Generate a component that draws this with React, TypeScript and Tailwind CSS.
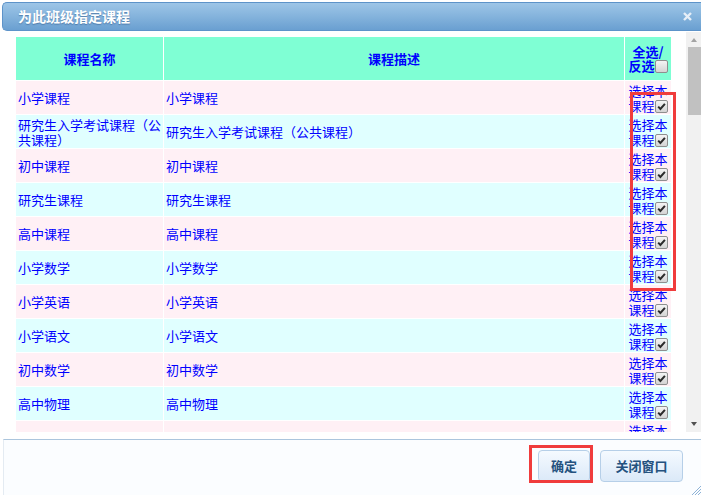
import React from 'react';

const COURSES = [
  '小学课程',
  '研究生入学考试课程（公共课程）',
  '初中课程',
  '研究生课程',
  '高中课程',
  '小学数学',
  '小学英语',
  '小学语文',
  '初中数学',
  '高中物理',
  '初中英语',
];

const Check: React.FC<{ checked?: boolean }> = ({ checked }) => (
  <span className="inline-block w-[13px] h-[13px] align-[-2px] rounded-[2px] border border-[#8e8e8e] bg-linear-to-b from-[#f4f4f4] to-[#d4d4d4]">
    {checked && (
      <svg viewBox="0 0 11 11" className="w-[11px] h-[11px] block">
        <path d="M2.2 5.6 L4.4 7.9 L8.9 2.8" stroke="#2b2b2b" strokeWidth="2" fill="none" />
      </svg>
    )}
  </span>
);

const Button: React.FC<{ label: string; className?: string }> = ({ label, className }) => (
  <button
    className={`h-[32px] rounded-[4px] border border-[#b6cfe8] bg-linear-to-b from-[#f5faff] to-[#dbe9f8] text-[13px] font-bold text-[#24527f] ${className ?? ''}`}
  >
    {label}
  </button>
);

export default function App() {
  return (
    <div className="relative w-[701px] h-[495px] overflow-hidden bg-white pt-[2px] font-['Noto_Sans_CJK_SC',sans-serif]">
      {/* title bar */}
      <div className="ml-[2px] h-[29px] flex items-center justify-between rounded-l-[5px] border border-r-0 border-[#5d93c9] bg-linear-to-b from-[#9dc5e7] via-[#84b3dc] to-[#6a9fd1] pl-[15px] pr-[9px]">
        <span className="text-[14px] font-bold text-white [text-shadow:0_1px_1px_rgba(40,80,130,0.5)]">为此班级指定课程</span>
        <svg viewBox="0 0 9 9" className="w-[9px] h-[9px]">
          <path d="M1 1 L8 8 M8 1 L1 8" stroke="#e6eef7" strokeWidth="2.4" />
        </svg>
      </div>

      {/* body */}
      <div className="mt-[1px] h-[400px] flex">
        <div className="flex-1 overflow-hidden pl-[15px] pt-[4px]">
          <table className="table-fixed border-separate border-spacing-[1px] bg-white text-[13px] text-[#0000ff]">
            <thead>
              <tr>
                <th className="w-[147px] h-[43px] bg-[#7fffd4] font-bold">课程名称</th>
                <th className="w-[460px] h-[43px] bg-[#7fffd4] font-bold">课程描述</th>
                <th className="w-[46px] h-[43px] bg-[#7fffd4] font-bold leading-[14px] p-0">
                  全选/
                  <br />
                  反选<Check />
                </th>
              </tr>
            </thead>
            <tbody>
              {COURSES.map((name, i) => {
                const bg = i % 2 === 0 ? 'bg-[#fff0f5]' : 'bg-[#e0ffff]';
                return (
                  <tr key={i}>
                    <td className={`${bg} h-[33px] pl-[2px] pr-0 leading-[15px]`}>{name}</td>
                    <td className={`${bg} h-[33px] pl-[2px] leading-[15px]`}>{name}</td>
                    <td className={`${bg} h-[33px] p-0 text-center leading-[15px]`}>
                      选择本课程<Check checked />
                    </td>
                  </tr>
                );
              })}
            </tbody>
          </table>
        </div>

        {/* scrollbar */}
        <div className="w-[15px] bg-[#f1f1f1] flex flex-col items-center">
          <svg viewBox="0 0 6 4" className="mt-[6px] w-[6px] h-[4px]">
            <path d="M0 4 L3 0 L6 4 Z" fill="#a3a3a3" />
          </svg>
          <div className="mt-[5px] ml-[2px] self-stretch h-[68px] bg-[#c1c1c1]" />
          <div className="flex-1" />
          <svg viewBox="0 0 6 4" className="mb-[6px] w-[6px] h-[4px]">
            <path d="M0 0 L6 0 L3 4 Z" fill="#505050" />
          </svg>
        </div>
      </div>

      {/* footer */}
      <div className="mt-[7px] ml-[3px] h-[56px] border-t border-l border-t-[#abc5dd] border-l-[#e4ebf2] bg-[#fbfdff] flex justify-end items-start gap-[10px] pt-[10px] pr-[18px]">
        <Button label="确定" className="w-[52px]" />
        <Button label="关闭窗口" className="w-[83px]" />
      </div>

      {/* highlight boxes */}
      <div className="absolute left-[630px] top-[92px] w-[46px] h-[199px] border-[3px] border-[#f03c3c]" />
      <div className="absolute left-[529px] top-[445px] w-[64px] h-[38px] border-[3px] border-[#f03c3c]" />

      {/* resize grip */}
      <svg viewBox="0 0 11 11" className="absolute right-0 bottom-0 w-[11px] h-[11px]">
        <path d="M11 2 L2 11 M11 5 L5 11 M11 8 L8 11" stroke="#8fb3d6" strokeWidth="1" />
      </svg>
    </div>
  );
}
